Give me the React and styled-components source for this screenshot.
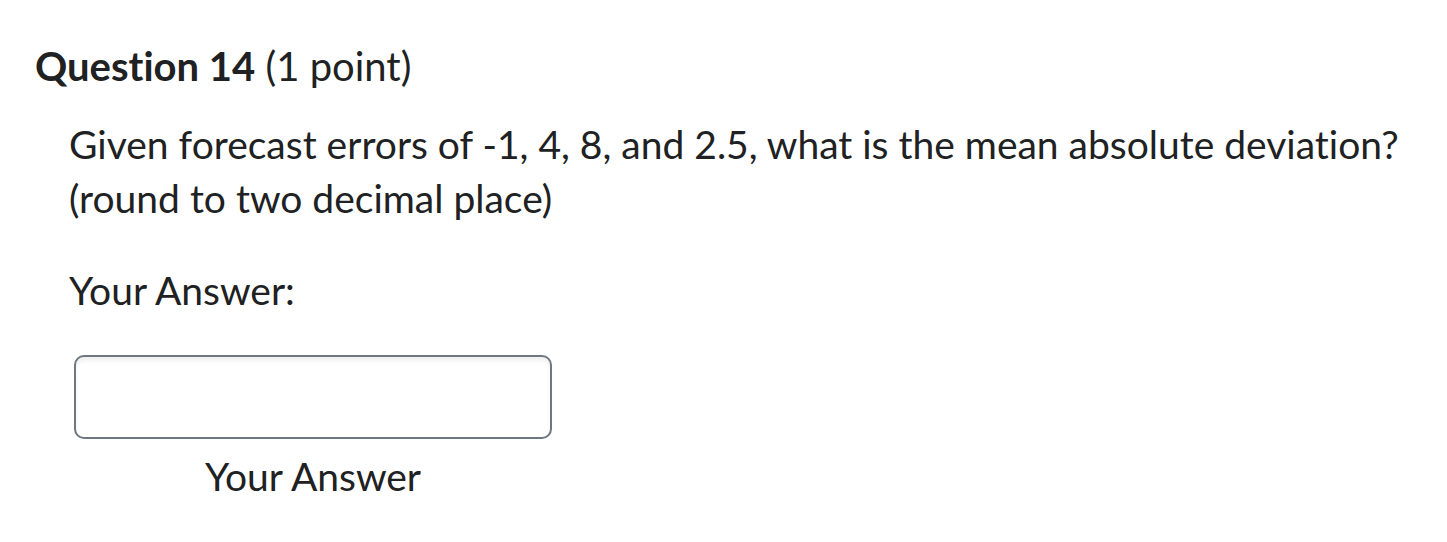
import React from "react";
import styled, { createGlobalStyle } from "styled-components";

const Global = createGlobalStyle`
  html, body { margin: 0; padding: 0; background: #fff; }
  body {
    font-family: Lato, "Noto Sans", sans-serif;
    color: #202122;
    font-variant-ligatures: none;
  }
`;

const Page = styled.div`
  padding: 38px 0 0 35px;
`;

const Title = styled.h2`
  margin: 0;
  font-size: 40px;
  line-height: 56px;
  font-weight: 400;
  color: #202122;
`;

const Strong = styled.span`
  font-weight: 700;
`;

const Body = styled.div`
  padding: 23px 0 0 34px;
`;

const Prompt = styled.p`
  margin: 0;
  font-size: 39px;
  line-height: 54px;
`;

const Label = styled.p`
  margin: 38px 0 0;
  font-size: 39px;
  line-height: 54px;
`;

const Field = styled.div`
  display: inline-flex;
  flex-direction: column;
  align-items: center;
  margin: 38px 0 0 5px;
`;

const Input = styled.input`
  box-sizing: border-box;
  width: 478px;
  height: 84px;
  border: 2px solid #6f7780;
  border-radius: 10px;
  box-shadow: inset 0 4px 4px rgba(0, 0, 0, 0.06);
  outline: none;
  font: inherit;
`;

const Caption = styled.div`
  font-size: 39px;
  line-height: 54px;
  margin-top: 10px;
`;

export default function App() {
  return (
    <>
      <Global />
      <Page>
        <Title>
          <Strong>Question 14</Strong> (1 point)
        </Title>
        <Body>
          <Prompt>
            Given forecast errors of -1, 4, 8, and 2.5, what is the mean absolute deviation?
            <br />
            (round to two decimal place)
          </Prompt>
          <Label>Your Answer:</Label>
          <Field>
            <Input type="text" aria-label="Your Answer" />
            <Caption>Your Answer</Caption>
          </Field>
        </Body>
      </Page>
    </>
  );
}
